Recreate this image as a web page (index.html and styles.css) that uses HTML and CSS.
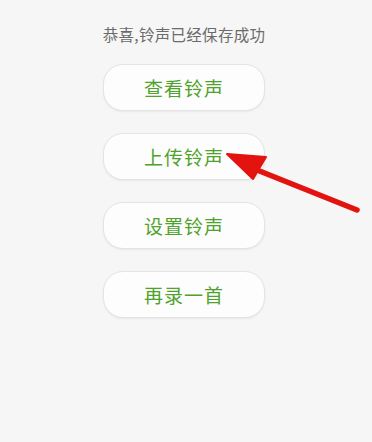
FILE: index.html
```html
<!DOCTYPE html>
<html lang="zh">
<head>
<meta charset="utf-8">
<link rel="stylesheet" href="styles.css">
</head>
<body>
<div class="page">
  <div class="title">恭喜,铃声已经保存成功</div>
  <div class="btns">
    <div class="btn">查看铃声</div>
    <div class="btn">上传铃声</div>
    <div class="btn">设置铃声</div>
    <div class="btn">再录一首</div>
  </div>
  <svg class="arrow" width="372" height="442" viewBox="0 0 372 442">
    <line x1="252" y1="168" x2="357" y2="210" stroke="#e3130f" stroke-width="5.5" stroke-linecap="round"/>
    <polygon points="227,154 266,157 253,179" fill="#e3130f" stroke="#e3130f" stroke-width="2" stroke-linejoin="round"/>
  </svg>
</div>
</body>
</html>
```
FILE: styles.css
```css
html, body {
  margin: 0;
  padding: 0;
  background: #f6f6f6;
}
.page {
  position: relative;
  box-sizing: border-box;
  width: 372px;
  height: 442px;
  padding-right: 4px;
  font-family: "Noto Sans CJK SC", "Noto Sans", sans-serif;
  display: flex;
  flex-direction: column;
  align-items: center;
}
.title {
  margin-top: 24px;
  font-size: 15.5px;
  line-height: 20px;
  color: #6b6b6b;
  letter-spacing: 0.3px;
}
.btns {
  margin-top: 20px;
  display: flex;
  flex-direction: column;
  gap: 22px;
}
.btn {
  box-sizing: border-box;
  width: 162px;
  height: 47px;
  border: 1px solid #e4e4e4;
  border-radius: 20px;
  background: #fdfdfd;
  box-shadow: 0 1px 2px rgba(0,0,0,0.06);
  display: flex;
  align-items: center;
  justify-content: center;
  font-size: 19px;
  font-weight: 400;
  letter-spacing: 1px;
  color: #4fa22a;
}
.arrow {
  position: absolute;
  left: 0;
  top: 0;
}
```
